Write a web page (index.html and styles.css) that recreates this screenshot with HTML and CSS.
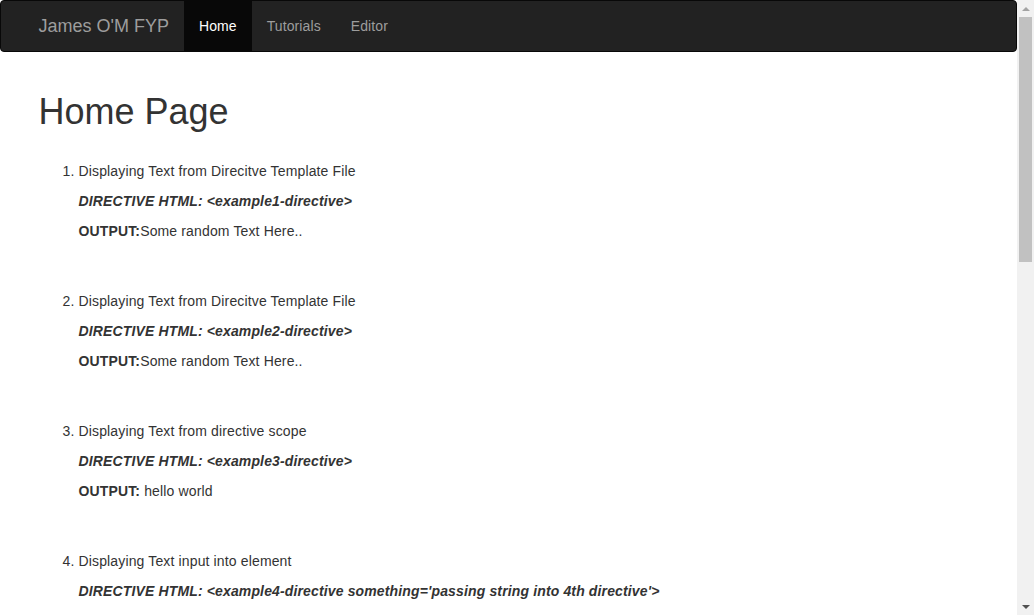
FILE: index.html
```html
<!DOCTYPE html>
<html>
<head>
<meta charset="utf-8">
<title>James O'M FYP</title>
<link rel="stylesheet" href="styles.css">
</head>
<body>
<div class="page">
<nav class="navbar">
  <div class="container nav-inner">
    <a class="brand" href="#">James O'M FYP</a>
    <ul class="nav">
      <li><a class="nav-link active" href="#">Home</a></li>
      <li><a class="nav-link" href="#">Tutorials</a></li>
      <li><a class="nav-link" href="#">Editor</a></li>
    </ul>
  </div>
</nav>
<main class="container content">
  <h1 class="title">Home Page</h1>
  <ol class="examples">
    <li class="example">
      <p class="line">Displaying Text from Direcitve Template File</p>
      <p class="line"><b><i>DIRECTIVE HTML: &lt;example1-directive&gt;</i></b></p>
      <p class="line"><b>OUTPUT:</b>Some random Text Here..</p>
    </li>
    <li class="example">
      <p class="line">Displaying Text from Direcitve Template File</p>
      <p class="line"><b><i>DIRECTIVE HTML: &lt;example2-directive&gt;</i></b></p>
      <p class="line"><b>OUTPUT:</b>Some random Text Here..</p>
    </li>
    <li class="example">
      <p class="line">Displaying Text from directive scope</p>
      <p class="line"><b><i>DIRECTIVE HTML: &lt;example3-directive&gt;</i></b></p>
      <p class="line"><b>OUTPUT:</b> hello world</p>
    </li>
    <li class="example">
      <p class="line">Displaying Text input into element</p>
      <p class="line"><b><i>DIRECTIVE HTML: &lt;example4-directive something='passing string into 4th directive'&gt;</i></b></p>
      <p class="line"><b>OUTPUT:</b> passing string into 4th directive</p>
    </li>
  </ol>
</main>
</div>
<div class="scrollbar" aria-hidden="true">
  <div class="sb-btn"><span class="arrow-up"></span></div>
  <div class="sb-track"><div class="sb-thumb"></div></div>
  <div class="sb-btn"><span class="arrow-down"></span></div>
</div>
</body>
</html>
```

FILE: styles.css
```css
html, body {
  margin: 0;
  padding: 0;
  height: 100%;
  overflow: hidden;
}
body {
  display: flex;
  font-family: "Liberation Sans", Arial, Helvetica, sans-serif;
  font-size: 14px;
  line-height: 1.42857143;
  color: #333;
  background: #fff;
}
.page {
  flex: 1;
  min-width: 0;
  height: 100vh;
  overflow: hidden;
}
.scrollbar {
  width: 17px;
  flex: none;
  height: 100vh;
  background: #f1f1f1;
  display: flex;
  flex-direction: column;
}
.sb-btn {
  height: 17px;
  flex: none;
  display: flex;
  align-items: center;
  justify-content: center;
}
.arrow-up {
  width: 0;
  height: 0;
  border-left: 4px solid transparent;
  border-right: 4px solid transparent;
  border-bottom: 4px solid #a3a3a3;
}
.arrow-down {
  width: 0;
  height: 0;
  border-left: 4px solid transparent;
  border-right: 4px solid transparent;
  border-top: 4px solid #505050;
}
.sb-track {
  flex: 1;
  padding: 0 2px;
}
.sb-thumb {
  height: 245px;
  background: #c1c1c1;
}
.container {
  width: 970px;
  margin: 0 auto;
  padding: 0 15px;
  box-sizing: border-box;
}
.navbar {
  background: #222;
  border: 1px solid #080808;
  border-radius: 4px;
  min-height: 50px;
  margin-bottom: 20px;
}
.nav-inner {
  display: flex;
  align-items: stretch;
  height: 50px;
}
.brand {
  display: block;
  margin-left: -15px;
  padding: 15px;
  height: 50px;
  box-sizing: border-box;
  font-size: 18px;
  line-height: 20px;
  color: #9d9d9d;
  text-decoration: none;
}
.nav {
  display: flex;
  list-style: none;
  margin: 0;
  padding: 0;
}
.nav-link {
  display: block;
  padding: 15px;
  line-height: 20px;
  letter-spacing: 0.1px;
  color: #9d9d9d;
  text-decoration: none;
}
.nav-link.active {
  background: #080808;
  color: #fff;
}
.content {
  display: flow-root;
}
.title {
  font-size: 36px;
  font-weight: 500;
  line-height: 1.1;
  margin: 20px 0 10px;
}
.examples {
  margin: 0;
  padding: 19px 0 0 40px;
  letter-spacing: 0.14px;
}
.example {
  padding-bottom: 40px;
}
.line {
  margin: 0 0 10px;
}
```
